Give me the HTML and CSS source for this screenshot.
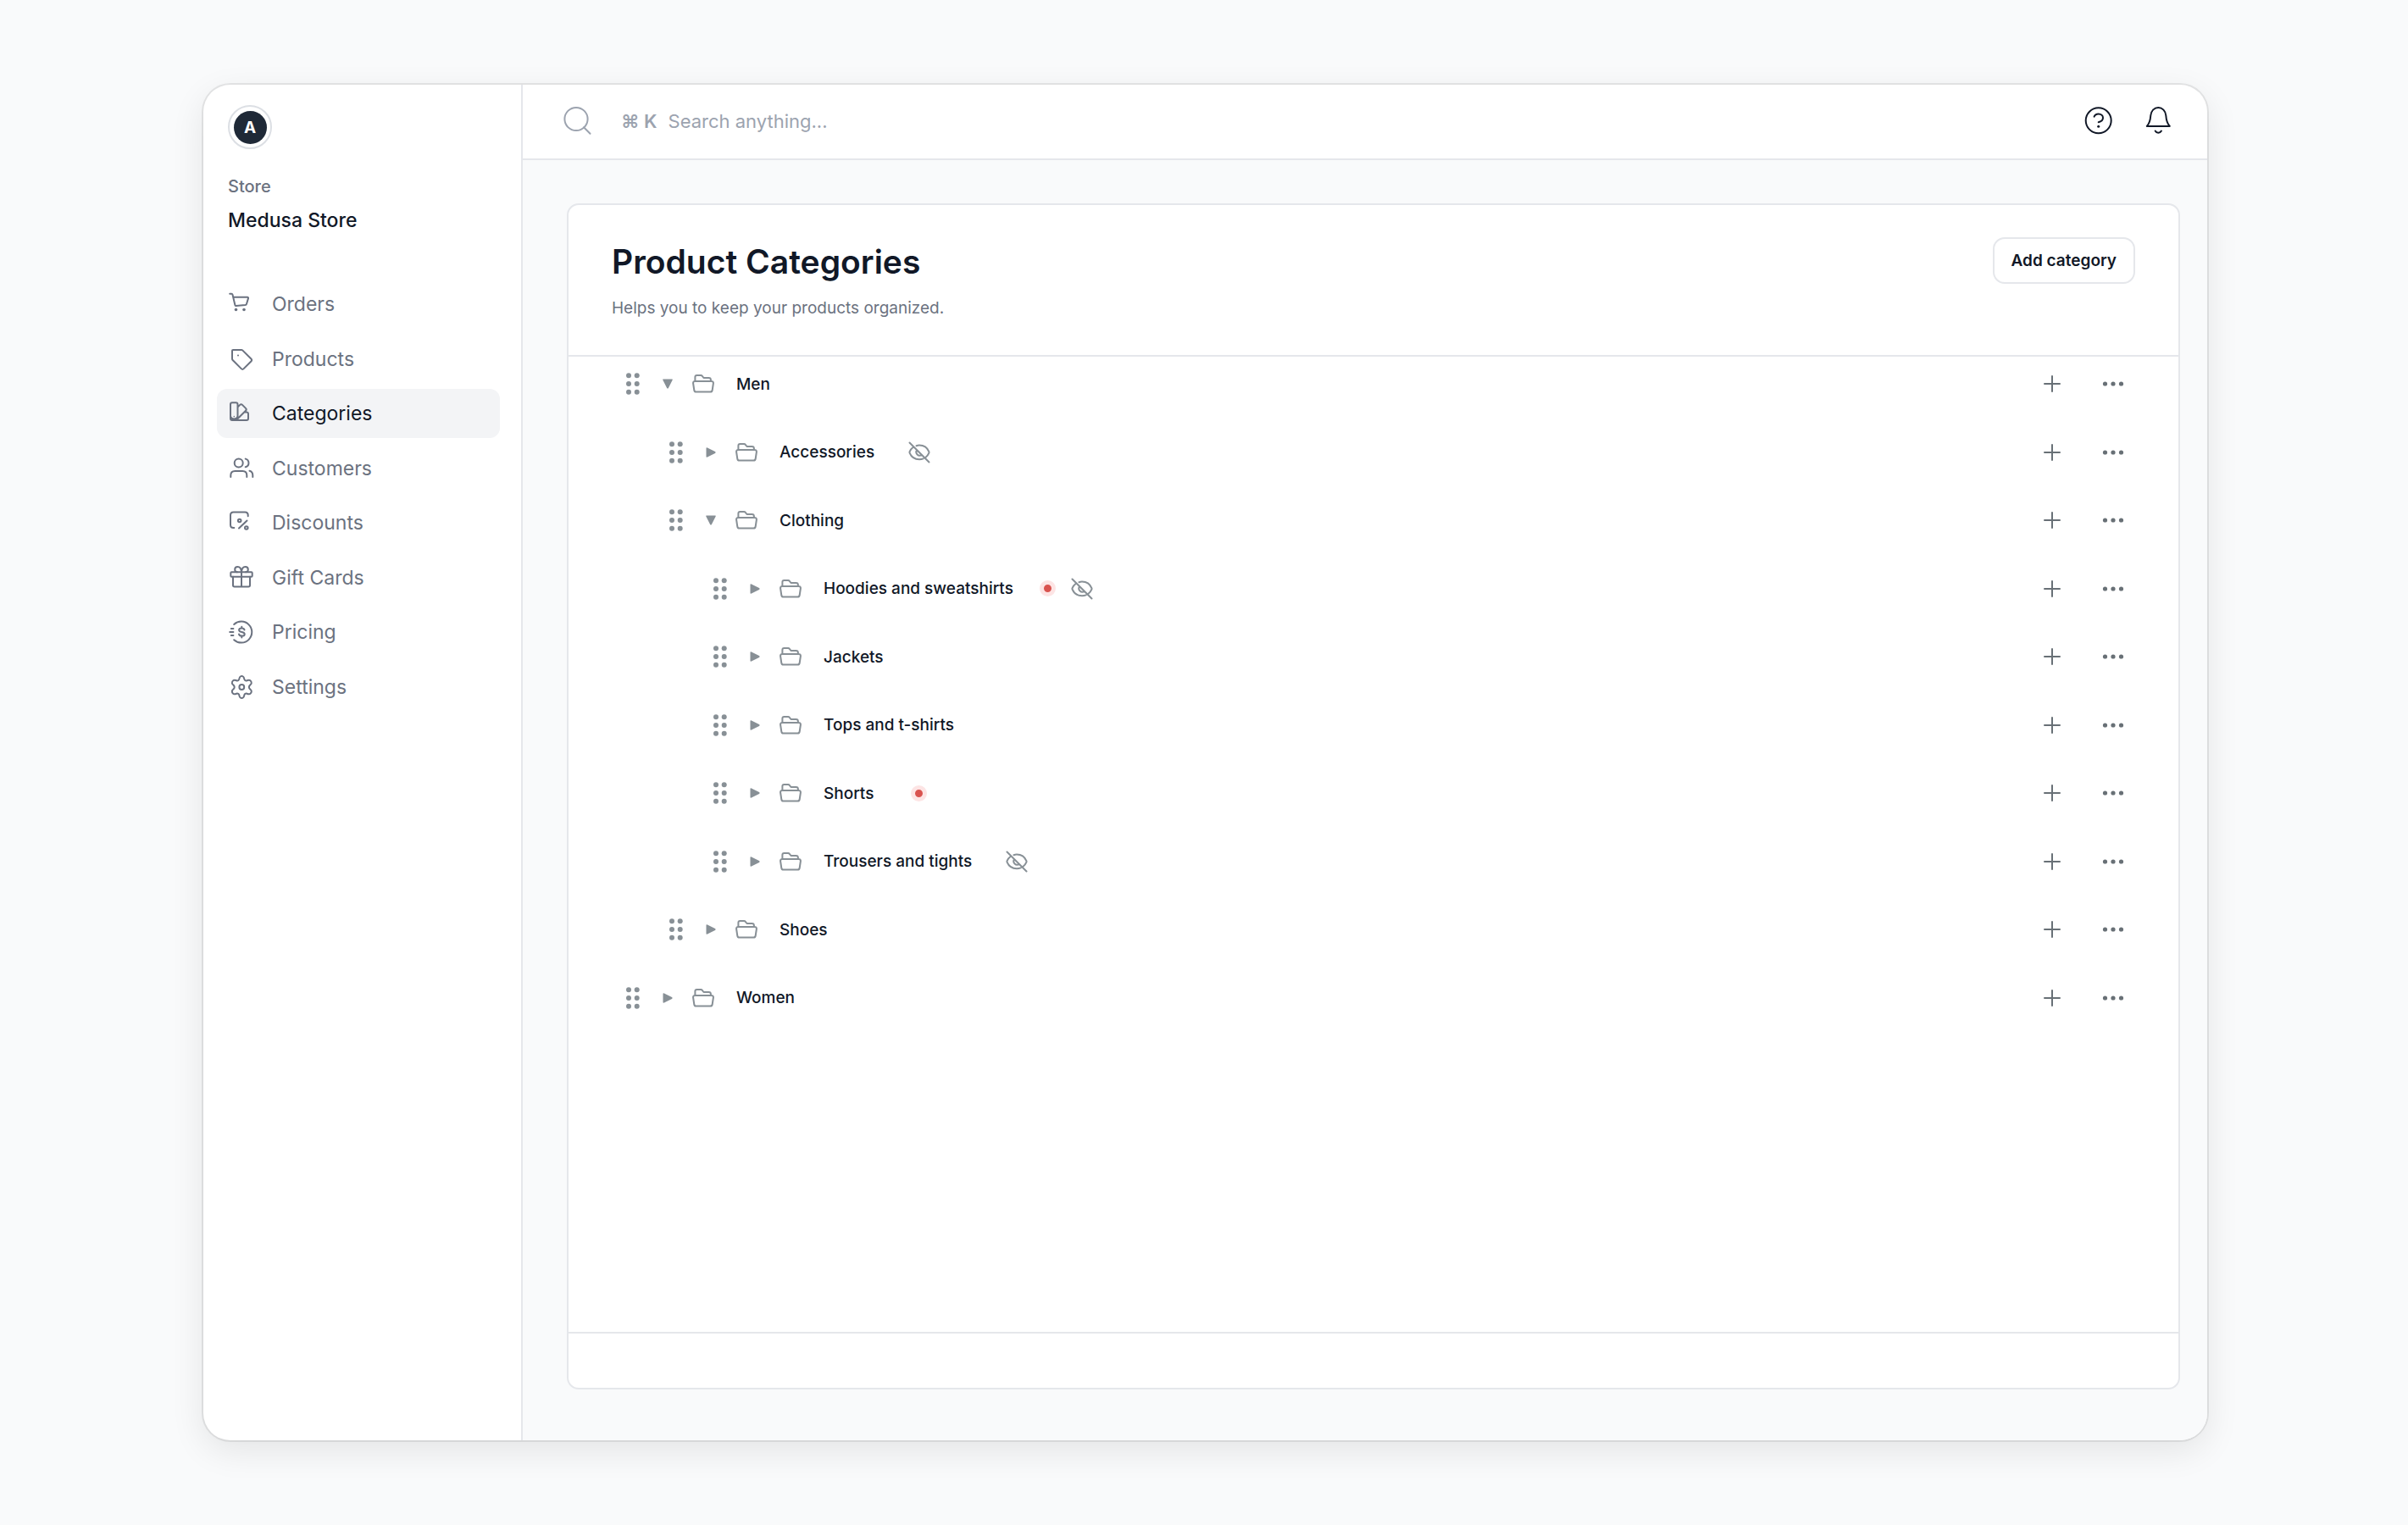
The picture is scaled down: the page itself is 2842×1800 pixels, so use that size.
FILE: index.html
```html
<!DOCTYPE html>
<html lang="en">
<head>
    <meta charset="UTF-8">
    <meta name="viewport" content="width=device-width, initial-scale=1.0">
    <title>Product Categories</title>
    <link rel="stylesheet" href="styles.css">
</head>
<body>
    <svg class="sprite" aria-hidden="true">
        <symbol id="drag" viewBox="0 0 16 26">
            <circle cx="3" cy="3.3" r="3"/><circle cx="12.7" cy="3.3" r="3"/>
            <circle cx="3" cy="13" r="3"/><circle cx="12.7" cy="13" r="3"/>
            <circle cx="3" cy="22.7" r="3"/><circle cx="12.7" cy="22.7" r="3"/>
        </symbol>
        <symbol id="open" viewBox="0 0 12 12">
            <path d="M.9.5h10.2c.5 0 .8.5.6.9L6.9 11c-.4.8-1.4.8-1.8 0L.3 1.4C.1 1 .4.5.9.5z"/>
        </symbol>
        <symbol id="closed" viewBox="0 0 12 12">
            <path d="M.5 11.1V.9c0-.5.5-.8.9-.6L11 5.1c.8.4.8 1.4 0 1.8l-9.6 4.8c-.4.2-.9-.1-.9-.6z"/>
        </symbol>
        <symbol id="folder" viewBox="0 0 26 24">
            <path d="M3.4 9V4c0-1.200.8-2 2-2h4.800c.7 0 1.200.3 1.600.8L13.500 5h6c1.400 0 2.400 1 2.400 2.400V9M3.200 8.900h19.500c1.400 0 2.400 1.200 2.200 2.600l-1.200 8c-.2 1.200-1.100 2-2.300 2H4.600c-1.200 0-2.100-.8-2.300-2l-1.200-8c-.2-1.400.7-2.600 2.100-2.600z"/>
        </symbol>
        <symbol id="hidden" viewBox="0 0 26 26">
            <path d="M1.500 1.500l23 23M9.500 5.200c1.100-.4 2.300-.6 3.500-.6 5.500 0 9.600 3.300 11.400 7.600.2.500.2 1 0 1.500-.8 1.900-2 3.500-3.600 4.800M5.300 7.300C3.600 8.500 2.400 10.200 1.600 12.200c-.2.500-.2 1 0 1.500C3.400 18 7.500 21.300 13 21.300c1.700 0 3.300-.3 4.700-.9M10.200 10.200a4 4 0 0 0 5.600 5.600"/>
        </symbol>
        <symbol id="plus" viewBox="0 0 32 32">
            <path d="M16 7v18M7 16h18"/>
        </symbol>
        <symbol id="more" viewBox="0 0 32 32">
            <circle cx="6.500" cy="16" r="2.600"/><circle cx="16" cy="16" r="2.600"/><circle cx="25.500" cy="16" r="2.600"/>
        </symbol>
    </svg>

    <div class="app">
        <aside class="sidebar">
            <button class="avatar" aria-label="Account"><span>A</span></button>
            <p class="store-label">Store</p>
            <p class="store-name">Medusa Store</p>
            <nav class="nav">
                <a href="#">
                    <svg viewBox="0 0 32 32"><path d="M2.200 3.800h2.100c.6 0 1 .4 1.200 1l.7 3M6.200 7.800l2.200 9.300c.1.500.6.9 1.100.8l10.800-.8c.9-.1 1.500-.6 1.700-1.400L24 9.100c.2-.7-.3-1.300-1-1.300z"/><g class="solid"><circle cx="9.500" cy="22.500" r="1.800"/><circle cx="19" cy="22.500" r="1.800"/></g></svg>
                    Orders
                </a>
                <a href="#">
                    <svg viewBox="0 0 32 32"><path d="M5 6v9.600c0 .5.2 1 .6 1.400L16 27.400c.7.700 1.700.7 2.400 0l9.200-9.200c.7-.7.7-1.700 0-2.400L17.400 5.600c-.4-.4-.9-.6-1.400-.6H6c-.6 0-1 .4-1 1z"/><circle class="solid" cx="12" cy="11.500" r="1"/></svg>
                    Products
                </a>
                <a href="#" class="active" aria-current="page">
                    <svg viewBox="0 0 32 32"><path d="M5 3.300h4.500c1.200 0 2 .8 2 2V19.500a4.500 4.500 0 0 1-8.500 0V5.300c0-1.200.8-2 2-2zM3 19v3c0 1.200.8 2 2 2h17c1.200 0 2-.8 2-2v-5.500c0-1.200-.8-2-2-2h-2.500M11.500 8.500l2.700-2.600c.8-.8 2-.8 2.800 0l4 4c.8.800.8 2 0 2.800L9.700 24"/><circle class="solid" cx="7.300" cy="19.600" r=".8"/></svg>
                    Categories
                </a>
                <a href="#">
                    <svg viewBox="0 0 32 32"><circle cx="12.700" cy="9.400" r="5"/><path d="M3.300 26v-2c0-3 2-5 5-5h9c3 0 5 2 5 5v2M20.700 4.600a5 5 0 0 1 0 9.700M25.500 18.800c2.300.6 3.800 2.500 3.800 5.200v2"/></svg>
                    Customers
                </a>
                <a href="#">
                    <svg viewBox="0 0 32 32"><path d="M7.300 22H6.500C4.400 22 3 20.600 3 18.500V7c0-2.100 1.400-3.500 3.500-3.500h13.700c2.100 0 3.500 1.400 3.500 3.500v1.300M22.500 13.500l-9.500 9"/><circle cx="13.700" cy="13.500" r="1.800"/><circle cx="21.800" cy="22" r="1.800"/></svg>
                    Discounts
                </a>
                <a href="#">
                    <svg viewBox="0 0 32 32"><rect x="3.300" y="9.300" width="25.400" height="5.400" rx="1"/><path d="M6 14.700v10c0 1 .7 1.700 1.700 1.700h16.600c1 0 1.700-.7 1.700-1.700v-10M16 9.300v17M16 9.300c-.3-4-1.800-6.300-4.500-6.300-2 0-3.300 1.400-3.300 3.200S9.500 9.300 11 9.300M16 9.300c.3-4 1.800-6.300 4.500-6.300 2 0 3.300 1.400 3.300 3.200S22.500 9.300 21 9.300"/></svg>
                    Gift Cards
                </a>
                <a href="#">
                    <svg viewBox="0 0 32 32"><path d="M7.200 7a12.500 12.500 0 1 1 0 18.200M3.800 12h2.600M2.200 16h4.200M3.800 20h2.600M19.500 13.500c-.3-1.300-1.500-2-3.200-2-1.900 0-3.200.8-3.200 2.200 0 3.200 6.600 1.400 6.600 4.700 0 1.400-1.400 2.200-3.300 2.200s-3.100-.8-3.400-2.100M16.300 9.700v1.800M16.300 20.600v1.800"/></svg>
                    Pricing
                </a>
                <a href="#">
                    <svg viewBox="0 0 32 32"><circle cx="16.300" cy="16" r="2.900"/><path d="M14.700 3.500c1-.6 2.200-.6 3.200 0 .9.500 1.100 1.500 1.300 2.700.3 1.700 1.700 2.600 3.400 2 1.200-.4 2.700-1.200 4 .2.700.7 1.100 1.500 1.200 2.500.2 1.300-.8 2-1.700 2.700-1.600 1.300-1.600 3.500 0 4.800.9.700 1.900 1.400 1.700 2.700-.1 1-.5 1.800-1.200 2.500-1.300 1.400-2.800.6-4 .2-1.700-.6-3.100.3-3.400 2-.2 1.200-.4 2.200-1.300 2.700-1 .6-2.200.6-3.200 0-.9-.5-1.100-1.500-1.300-2.700-.3-1.700-1.700-2.600-3.400-2-1.200.4-2.700 1.200-4-.2-.7-.7-1.100-1.500-1.200-2.500-.2-1.300.8-2 1.700-2.700 1.600-1.300 1.600-3.500 0-4.800-.9-.7-1.900-1.400-1.700-2.700.1-1 .5-1.800 1.200-2.500 1.300-1.400 2.800-.6 4-.2 1.700.6 3.100-.3 3.400-2 .2-1.200.4-2.200 1.300-2.700z"/></svg>
                    Settings
                </a>
            </nav>
        </aside>

        <div class="content">
            <header class="topbar">
                <label class="search">
                    <svg viewBox="0 0 36 36"><circle cx="17" cy="15.500" r="13.600"/><path d="M26 25.200l7.500 7.600"/></svg>
                    <kbd>⌘ K</kbd>
                    <input type="text" placeholder="Search anything..." aria-label="Search">
                </label>
                <button class="icon-button" aria-label="Help">
                    <svg viewBox="0 0 36 36"><circle cx="17.700" cy="17.300" r="15"/><path d="M12.600 12.700c.7-2 2.700-3.300 5.100-3.300 3 0 5.300 2 5.300 4.700 0 3.500-3.200 4.700-5.300 5.200"/><circle class="solid" cx="17.700" cy="24.300" r="1.500"/></svg>
                </button>
                <button class="icon-button" aria-label="Notifications">
                    <svg viewBox="0 0 36 36"><path d="M9.300 11.300c.4-5.500 4.300-9.300 9-9.300s8.600 3.800 9 9.300c.4 5.800 1.300 9.500 4.500 12.600H4.800c3.200-3.100 4.100-6.800 4.500-12.600zM14.700 29.600c1.500 2.700 5.700 2.700 7.200 0"/></svg>
                </button>
            </header>

            <main class="main">
                <section class="panel">
                    <div class="panel-header">
                        <div>
                            <h1>Product Categories</h1>
                            <p>Helps you to keep your products organized.</p>
                        </div>
                        <button class="add-button">Add category</button>
                    </div>
                    <div class="panel-body">
                        <ul class="tree" id="tree"></ul>
                    </div>
                    <div class="panel-footer"></div>
                </section>
            </main>
        </div>
    </div>

    <script>
        const categories = [
            { name: 'Men', level: 0, open: true },
            { name: 'Accessories', level: 1, hidden: true },
            { name: 'Clothing', level: 1, open: true },
            { name: 'Hoodies and sweatshirts', level: 2, inactive: true, hidden: true },
            { name: 'Jackets', level: 2 },
            { name: 'Tops and t-shirts', level: 2 },
            { name: 'Shorts', level: 2, inactive: true },
            { name: 'Trousers and tights', level: 2, hidden: true },
            { name: 'Shoes', level: 1 },
            { name: 'Women', level: 0 }
        ];

        function icon(name) {
            return `<svg class="${name}"><use href="#${name}"/></svg>`;
        }

        // Builds the status icons shown after the name
        function statusIcons(category) {
            let html = '';
            if (category.inactive) html += '<span class="status"><span class="dot"></span></span>';
            if (category.hidden) html += `<span class="status">${icon('hidden')}</span>`;
            const both = category.inactive && category.hidden;
            return html && `<span class="statuses${both ? ' both' : ''}">${html}</span>`;
        }

        document.getElementById('tree').innerHTML = categories.map(category => `
            <li class="level-${category.level}">
                <button aria-label="Move">${icon('drag')}</button>
                <button aria-label="Toggle">${icon(category.open ? 'open' : 'closed')}</button>
                ${icon('folder')}
                <span class="name">${category.name}</span>
                ${statusIcons(category)}
                <span class="actions">
                    <button aria-label="Add subcategory">${icon('plus')}</button>
                    <button aria-label="More">${icon('more')}</button>
                </span>
            </li>`).join('');
    </script>
</body>
</html>
```
FILE: styles.css
```css
* {
    box-sizing: border-box;
}
body {
    margin: 0;
    padding: 100px 237px 100px 240px;
    background-color: #f9fafb;
    color: #111827;
    font-family: Inter, "Liberation Sans", sans-serif;
    font-size: 19px;
}
h1, p, ul {
    margin: 0;
    padding: 0;
}
button {
    padding: 0;
    border: 0;
    background: none;
    color: inherit;
    font: inherit;
    cursor: pointer;
}
svg {
    display: block;
    flex: none;
    fill: none;
    stroke: currentColor;
    stroke-width: 2;
    stroke-linecap: round;
    stroke-linejoin: round;
}
.solid {
    fill: currentColor;
    stroke: none;
}
.sprite {
    display: none;
}
.app {
    display: flex;
    min-height: calc(100vh - 200px);
    border-radius: 32px;
    overflow: hidden;
    background-color: #fff;
    box-shadow: 0 0 0 2px rgba(0, 0, 0, 0.08), 0 12px 40px rgba(0, 0, 0, 0.09);
}

/* Sidebar */
.sidebar {
    flex: none;
    width: 377px;
    padding: 24px 25px 24px 16px;
    border-right: 2px solid #e5e7eb;
}
.avatar {
    display: flex;
    align-items: center;
    justify-content: center;
    width: 52px;
    height: 52px;
    margin-left: 13px;
    border: 2px solid #dcdfe4;
    border-radius: 50%;
}
.avatar span {
    width: 39px;
    border-radius: 50%;
    background-color: #1f2937;
    color: #fff;
    font-weight: 700;
    line-height: 39px;
}
.store-label,
.store-name {
    margin-left: 13px;
    font-weight: 500;
}
.store-label {
    margin-top: 28px;
    color: #6b7280;
    font-size: 20px;
    line-height: 32px;
}
.store-name {
    margin-top: 4px;
    font-size: 23px;
    line-height: 40px;
}
.nav {
    display: flex;
    flex-direction: column;
    justify-content: space-between;
    height: 510px;
    margin-top: 50px;
}
.nav a {
    display: flex;
    align-items: center;
    gap: 20px;
    height: 58px;
    padding: 0 13px;
    border-radius: 12px;
    color: #6b7280;
    font-size: 23px;
    text-decoration: none;
}
.nav svg {
    width: 32px;
    height: 32px;
}
.nav .active {
    background-color: #f3f4f6;
    color: #111827;
}
.nav .active svg {
    color: #6b7280;
}

/* Top bar */
.content {
    display: flex;
    flex: 1;
    flex-direction: column;
}
.topbar {
    display: flex;
    align-items: center;
    gap: 34px;
    height: 89px;
    padding: 0 40px 1px 46px;
    border-bottom: 2px solid #e5e7eb;
}
.topbar svg {
    width: 36px;
    height: 36px;
}
.search {
    display: flex;
    flex: 1;
    align-items: center;
    color: #9ca3af;
    font-size: 22px;
}
.search kbd {
    margin: 0 13px 0 34px;
    font-family: inherit;
    font-weight: 600;
}
.search input {
    flex: 1;
    padding: 0;
    border: 0;
    outline: 0;
    background: none;
    color: inherit;
    font: inherit;
}
.search input::placeholder {
    color: inherit;
}

/* Panel */
.main {
    display: flex;
    flex: 1;
    padding: 51px 32px 60px 52px;
    background-color: #f9fafb;
}
.panel {
    display: flex;
    flex: 1;
    flex-direction: column;
    border: 2px solid #e5e7eb;
    border-radius: 14px;
    background-color: #fff;
}
.panel-header {
    display: flex;
    align-items: flex-start;
    justify-content: space-between;
    padding: 38px 51px 39px 51px;
    border-bottom: 2px solid #e5e7eb;
}
.panel-header h1 {
    font-size: 39px;
    font-weight: 600;
    line-height: 58px;
}
.panel-header p {
    margin-top: 10px;
    color: #6b7280;
    line-height: 32px;
}
.add-button {
    height: 55px;
    padding: 0 20px;
    border: 2px solid #e5e7eb;
    border-radius: 14px;
    font-weight: 600;
}
.panel-body {
    flex: 1;
}
.panel-footer {
    height: 66px;
    border-top: 2px solid #e5e7eb;
}

/* Category tree */
.tree {
    display: flex;
    flex-direction: column;
    justify-content: space-between;
    height: 789px;
    list-style: none;
}
.tree li {
    display: flex;
    align-items: center;
    height: 64px;
    padding: 0 61px 0 68px;
    color: #889096;
}
.tree .level-1 {
    padding-left: 119px;
}
.tree .level-2 {
    padding-left: 171px;
}
.drag,
.open,
.closed,
.more {
    fill: currentColor;
    stroke: none;
}
.drag {
    width: 16px;
    height: 26px;
}
.open,
.closed {
    width: 12px;
    height: 12px;
    margin: 0 23px 0 27px;
}
.folder {
    width: 26px;
    height: 24px;
}
.name {
    margin-left: 26px;
    color: #111827;
    font-weight: 500;
}
.statuses {
    display: flex;
    gap: 14px;
    margin-left: 40px;
}
.statuses.both {
    margin-left: 28px;
}
.status {
    display: flex;
    align-items: center;
    justify-content: center;
    width: 26px;
    height: 26px;
}
.hidden {
    width: 26px;
    height: 26px;
}
.dot {
    width: 19px;
    height: 19px;
    border: 5px solid #fde4e4;
    border-radius: 50%;
    background-color: #d9534f;
}
.actions {
    display: flex;
    gap: 40px;
    margin-left: auto;
    color: #687076;
}
.plus,
.more {
    width: 32px;
    height: 32px;
}
```
